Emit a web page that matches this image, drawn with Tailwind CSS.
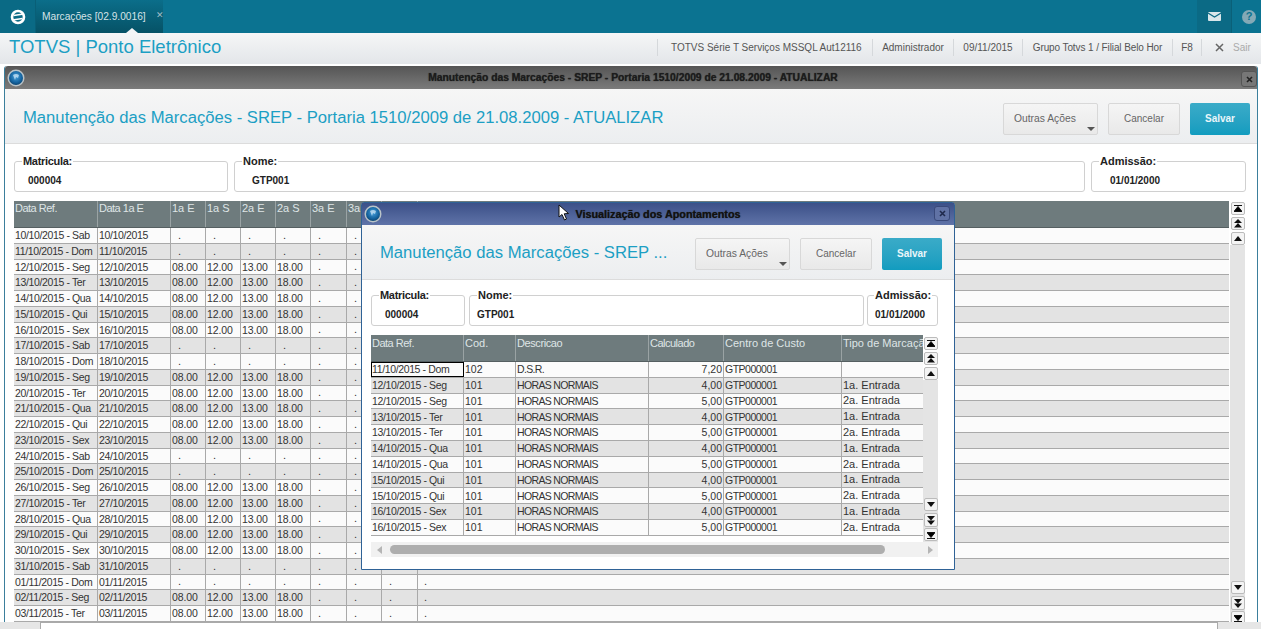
<!DOCTYPE html>
<html lang="pt-BR">
<head>
  <meta charset="UTF-8">
  <title>TOTVS | Ponto Eletrônico</title>
  <script src="https://cdn.jsdelivr.net/npm/@tailwindcss/browser@4"></script>
</head>
<body class="w-[1261px] h-[629px] overflow-hidden relative bg-white font-['Liberation_Sans',Arial,sans-serif] text-[#333]">

  <svg width="0" height="0" class="absolute">
    <defs>
      <radialGradient id="globe" cx="50%" cy="40%" r="60%"><stop offset="0" stop-color="#4aa3dd"/><stop offset="0.7" stop-color="#14639f"/><stop offset="1" stop-color="#0d4673"/></radialGradient>
    </defs>
  </svg>

  <!-- top bar -->
  <header class="h-[33px] flex bg-[#0b7391]">
    <div class="w-[36px] flex items-center justify-center bg-[#0a6a85] border-r border-[#095f77]">
      <svg width="18" height="18" viewBox="0 0 18 18" fill="none"><circle cx="9" cy="9" r="6" stroke="#fff" stroke-width="2.6"/><path d="M4.5 7.6 L13 6.2 M5 11.8 L13.5 10.4" stroke="#fff" stroke-width="1.5"/></svg>
    </div>
    <div class="w-[127px] relative flex items-center pl-[6px] gap-[10px] bg-gradient-to-b from-[#0b6e8a] to-[#065266] text-[10.2px] text-[#d5e3e8] whitespace-nowrap">
      <span>Marcações [02.9.0016]</span>
      <span class="text-[9px] text-[#9fbcc6] -mt-[2px]">✕</span>
      <span class="absolute left-[90px] bottom-0 w-0 h-0 border-x-[6px] border-x-transparent border-b-[5px] border-b-[#f4f5f6]"></span>
    </div>
    <div class="flex-1"></div>
    <div class="w-[35px] flex items-center justify-center bg-[#0b6a85] border-r border-[#0a6078]">
      <svg width="13" height="9" viewBox="0 0 13 9"><rect width="13" height="9" rx="1" fill="#d9e6ea"/><path d="M0 1 L6.5 5 L13 1" fill="none" stroke="#0b6a85" stroke-width="1.1"/></svg>
    </div>
    <div class="w-[29px] pl-[10px] flex items-center">
      <span class="w-[14px] h-[14px] shrink-0 rounded-full bg-[#84a9b6] text-[#0b7391] text-[11px] font-bold flex items-center justify-center">?</span>
    </div>
  </header>

  <!-- system bar -->
  <div class="h-[31px] flex items-center bg-gradient-to-b from-[#f5f6f7] to-[#e3e6e9] pl-[9px] pr-[10px] pb-[2px]">
    <span class="text-[18.5px] text-[#1c9fc4] leading-none">TOTVS | Ponto Eletrônico</span>
    <div class="ml-auto flex items-center text-[10px] text-[#555] whitespace-nowrap">
      <span class="w-[216px] h-[17px] pl-[13px] border-x border-[#d5d8db] flex items-center">TOTVS Série T Serviços MSSQL Aut12116</span>
      <span class="w-[81px] h-[17px] border-r border-[#d5d8db] flex items-center justify-center">Administrador</span>
      <span class="w-[69px] h-[17px] border-r border-[#d5d8db] flex items-center justify-center">09/11/2015</span>
      <span class="w-[150px] h-[17px] border-r border-[#d5d8db] flex items-center justify-center tracking-[-0.1px]">Grupo Totvs 1 / Filial Belo Hor</span>
      <span class="w-[29px] h-[17px] border-r border-[#d5d8db] flex items-center justify-center">F8</span>
      <span class="w-[49px] h-[17px] pl-[13px] flex items-center gap-[9px] text-[#aaa]"><svg class="shrink-0" width="9" height="9" viewBox="0 0 9 9"><path d="M1 1 L8 8 M8 1 L1 8" stroke="#666" stroke-width="1.5"/></svg>Sair</span>
    </div>
  </div>

  <!-- main window -->
  <main class="absolute left-[4px] right-[3px] top-[66px] bottom-0 border-x border-[#3b7f9c] rounded-t-[3px] bg-white flex flex-col">
    <div class="h-[23px] shrink-0 relative flex items-center justify-center pt-[1px] pl-[4px] bg-gradient-to-b from-[#555] to-[#7b7b7b] rounded-t-[3px] text-[10.3px] font-bold text-[#1c1c1c] [text-shadow:0_0_1px_#222]">
      <svg class="absolute left-[2px] top-[3px]" width="18" height="18" viewBox="0 0 18 18"><circle cx="9" cy="9" r="8.5" fill="#b9c3c8"/><circle cx="9" cy="9" r="7" fill="url(#globe)"/><path d="M6 6 Q9 4 12 6 L11 9 L9 8 L8 11 Z" fill="#cfe6f5" opacity=".75"/></svg>
      <span>Manutenção das Marcações - SREP - Portaria 1510/2009 de 21.08.2009 - ATUALIZAR</span>
      <span class="absolute right-0 top-[5px] w-[16px] h-[16px] rounded-[3px] border border-[#555] bg-[#777] flex items-center justify-center">
        <svg width="7" height="7" viewBox="0 0 7 7"><path d="M1 1 L6 6 M6 1 L1 6" stroke="#222" stroke-width="1.6"/></svg>
      </span>
    </div>

    <div class="h-[55px] shrink-0 flex items-center pl-[18px] pr-[7px] pt-[5px] gap-[10px] bg-gradient-to-b from-[#f6f6f6] to-[#eceef0] border-b border-[#dcdcdc]">
      <h1 class="text-[16.65px] text-[#1c9fc4] mr-auto whitespace-nowrap">Manutenção das Marcações - SREP - Portaria 1510/2009 de 21.08.2009 - ATUALIZAR</h1>
      <button class="w-[95px] h-[32px] shrink-0 relative rounded-[2px] border border-[#d8d8d8] bg-gradient-to-b from-[#f5f5f5] to-[#e9e9e9] text-[10.3px] text-[#666] text-left pl-[10px]">Outras Ações<span class="absolute right-[2px] bottom-[3px] w-0 h-0 border-x-[4px] border-x-transparent border-t-[4px] border-t-[#555]"></span></button>
      <button class="w-[72px] h-[32px] shrink-0 rounded-[2px] border border-[#d8d8d8] bg-gradient-to-b from-[#f5f5f5] to-[#e9e9e9] text-[10px] text-[#666]">Cancelar</button>
      <button class="w-[60px] h-[32px] shrink-0 rounded-[2px] bg-gradient-to-b from-[#3aabc8] to-[#119cbf] text-[10px] font-bold text-[#e9f6fa]">Salvar</button>
    </div>

    <div class="flex-1 min-h-0 pl-[9px] pt-[17px] bg-white flex flex-col">
      <div class="h-[31px] shrink-0 flex gap-[6px] text-[10px] font-bold text-[#222] pr-[11px]">
        <div class="w-[214px] relative border border-[#d0d0d0] rounded-[3px] pl-[13px] pt-[11px]">
          <span class="absolute left-[7px] -top-[7px] bg-white px-[1px] text-[11px] tracking-[-0.3px] leading-[13px]">Matricula:</span>000004
        </div>
        <div class="flex-1 relative border border-[#d0d0d0] rounded-[3px] pl-[17px] pt-[11px]">
          <span class="absolute left-[7px] -top-[7px] bg-white px-[1px] text-[11px] leading-[13px]">Nome:</span>GTP001
        </div>
        <div class="w-[155px] relative border border-[#d0d0d0] rounded-[3px] pl-[18px] pt-[11px]">
          <span class="absolute left-[7px] -top-[7px] bg-white px-[1px] text-[11px] leading-[13px]">Admissão:</span>01/01/2000
        </div>
      </div>
      <div class="flex mt-[9px] min-h-0 flex-1">
        <div class="w-[1215px] overflow-hidden text-[11px] leading-none">
          <div class="h-[27px] flex bg-[#6e7b7d] text-[#dfe5e6] border-b border-[#555f61]">
            <span class="w-[84px] border-r border-[#9aa3a4] pl-[1px] pt-[2px] tracking-[-0.5px]">Data Ref.</span>
            <span class="w-[73px] border-r border-[#9aa3a4] pl-[1px] pt-[2px] tracking-[-0.5px]">Data 1a E</span>
            <span class="w-[35px] border-r border-[#9aa3a4] pl-[1px] pt-[2px]">1a E</span>
            <span class="w-[35px] border-r border-[#9aa3a4] pl-[1px] pt-[2px]">1a S</span>
            <span class="w-[35px] border-r border-[#9aa3a4] pl-[1px] pt-[2px]">2a E</span>
            <span class="w-[35px] border-r border-[#9aa3a4] pl-[1px] pt-[2px]">2a S</span>
            <span class="w-[36px] border-r border-[#9aa3a4] pl-[1px] pt-[2px]">3a E</span>
            <span class="w-[35px] border-r border-[#9aa3a4] pl-[1px] pt-[2px]">3a S</span>
            <span class="w-[36px] border-r border-[#9aa3a4] pl-[1px] pt-[2px]">4a E</span>
            <span class="flex-1"></span>
          </div>
          <div id="outer-rows"></div>
        </div>
        <div class="w-[15px] ml-[1px] flex flex-col items-end relative">
          <div class="absolute top-[44px] bottom-0 inset-x-0 bg-[#e4e4e4]"></div>
          <div class="relative mt-[1px] w-[14px] h-[13px] border border-[#bbb] rounded-[2px] bg-[#f4f4f4] flex items-center justify-center"><svg width="8" height="8" viewBox="0 0 8 8"><path d="M0 0.5H8M4 1.5L8 6.5H0Z" stroke="#111" stroke-width="1"/></svg></div>
          <div class="relative mt-[2px] w-[14px] h-[13px] border border-[#bbb] rounded-[2px] bg-[#f4f4f4] flex items-center justify-center"><svg width="8" height="9" viewBox="0 0 8 9"><path d="M4 0L8 4H0ZM4 4L8 8.5H0Z" fill="#111"/></svg></div>
          <div class="relative mt-[2px] w-[14px] h-[13px] border border-[#bbb] rounded-[2px] bg-[#f4f4f4] flex items-center justify-center"><svg width="8" height="5" viewBox="0 0 8 5"><path d="M4 0L8 5H0Z" fill="#111"/></svg></div>
          <div class="absolute top-[380px] w-[14px] h-[13px] border border-[#bbb] rounded-[2px] bg-[#f4f4f4] flex items-center justify-center"><svg width="8" height="5" viewBox="0 0 8 5"><path d="M4 5L8 0H0Z" fill="#111"/></svg></div>
          <div class="absolute top-[395px] w-[14px] h-[14px] border border-[#bbb] rounded-[2px] bg-[#f4f4f4] flex items-center justify-center"><svg width="8" height="9" viewBox="0 0 8 9"><path d="M4 4.5L8 0H0ZM4 9L8 4.5H0Z" fill="#111"/></svg></div>
          <div class="absolute top-[410px] w-[14px] h-[13px] border border-[#bbb] rounded-[2px] bg-[#f4f4f4] flex items-center justify-center"><svg width="8" height="8" viewBox="0 0 8 8"><path d="M0 7.5H8M4 6.5L8 1.5H0Z" stroke="#111" stroke-width="1"/></svg></div>
        </div>
      </div>
    </div>
  </main>

  <!-- bottom strip -->
  <div class="absolute left-0 right-0 bottom-0 h-[7px] flex bg-[#e6e6e6]">
    <div class="ml-[40px] w-[1178px] bg-white border-t border-l border-r border-[#aaa]"></div>
  </div>

  <!-- modal window -->
  <section class="absolute left-[361px] top-[202px] w-[594px] h-[368px] border border-[#2f6296] rounded-t-[3px] bg-white flex flex-col">
    <div class="h-[22px] shrink-0 relative flex items-center justify-center bg-gradient-to-b from-[#3c5088] to-[#5f73a8] text-[10.8px] font-bold text-[#111] [text-shadow:0_0_1px_#222]">
      <svg class="absolute left-[2px] top-[2px]" width="18" height="18" viewBox="0 0 18 18"><circle cx="9" cy="9" r="8.5" fill="#b9c3c8"/><circle cx="9" cy="9" r="7" fill="url(#globe)"/><path d="M6 6 Q9 4 12 6 L11 9 L9 8 L8 11 Z" fill="#cfe6f5" opacity=".75"/></svg>
      <span>Visualização dos Apontamentos</span>
      <span class="absolute right-[4px] top-[3px] w-[16px] h-[15px] rounded-[3px] border border-[#39497a] bg-[#6072a5] flex items-center justify-center">
        <svg width="7" height="7" viewBox="0 0 7 7"><path d="M1 1 L6 6 M6 1 L1 6" stroke="#1f2a4d" stroke-width="1.6"/></svg>
      </span>
    </div>
    <div class="h-[55px] shrink-0 flex items-center pl-[18px] pr-[12px] pt-[3px] gap-[10px] bg-gradient-to-b from-[#f6f6f6] to-[#eceef0] border-b border-[#dcdcdc]">
      <h2 class="text-[16.65px] text-[#1c9fc4] mr-auto whitespace-nowrap">Manutenção das Marcações - SREP ...</h2>
      <button class="w-[95px] h-[32px] shrink-0 relative rounded-[2px] border border-[#d8d8d8] bg-gradient-to-b from-[#f5f5f5] to-[#e9e9e9] text-[10.3px] text-[#666] text-left pl-[10px]">Outras Ações<span class="absolute right-[2px] bottom-[3px] w-0 h-0 border-x-[4px] border-x-transparent border-t-[4px] border-t-[#555]"></span></button>
      <button class="w-[72px] h-[32px] shrink-0 rounded-[2px] border border-[#d8d8d8] bg-gradient-to-b from-[#f5f5f5] to-[#e9e9e9] text-[10px] text-[#666]">Cancelar</button>
      <button class="w-[60px] h-[32px] shrink-0 rounded-[2px] bg-gradient-to-b from-[#3aabc8] to-[#119cbf] text-[10px] font-bold text-[#e9f6fa]">Salvar</button>
    </div>
    <div class="flex-1 pl-[9px] pt-[15px] flex flex-col">
      <div class="h-[31px] shrink-0 flex text-[10px] font-bold text-[#222] pr-[16px]">
        <div class="w-[94px] relative border border-[#d0d0d0] rounded-[3px] pl-[13px] pt-[11px]">
          <span class="absolute left-[7px] -top-[7px] bg-white px-[1px] text-[11px] tracking-[-0.3px] leading-[13px]">Matricula:</span>000004
        </div>
        <div class="flex-1 ml-[4px] relative border border-[#d0d0d0] rounded-[3px] pl-[7px] pt-[11px]">
          <span class="absolute left-[7px] -top-[7px] bg-white px-[1px] text-[11px] leading-[13px]">Nome:</span>GTP001
        </div>
        <div class="w-[71px] ml-[3px] relative border border-[#d0d0d0] rounded-[3px] pl-[7px] pt-[11px]">
          <span class="absolute left-[6px] -top-[7px] bg-white px-[1px] text-[11px] leading-[13px]">Admissão:</span>01/01/2000
        </div>
      </div>
      <div class="flex mt-[9px] w-[567px] relative">
        <div class="w-[552px] h-[207px] overflow-hidden text-[11px] leading-none">
          <div class="h-[27px] flex bg-[#6e7b7d] text-[#dfe5e6] border-b border-[#555f61]">
            <span class="w-[93px] border-r border-[#9aa3a4] pl-[1px] pt-[3px] tracking-[-0.5px]">Data Ref.</span>
            <span class="w-[52px] border-r border-[#9aa3a4] pl-[1px] pt-[3px]">Cod.</span>
            <span class="w-[133px] border-r border-[#9aa3a4] pl-[1px] pt-[3px] tracking-[-0.4px]">Descricao</span>
            <span class="w-[75px] border-r border-[#9aa3a4] pl-[1px] pt-[3px] tracking-[-0.5px]">Calculado</span>
            <span class="w-[118px] border-r border-[#9aa3a4] pl-[1px] pt-[3px]">Centro de Custo</span>
            <span class="flex-1 pl-[1px] pt-[3px] whitespace-nowrap overflow-hidden">Tipo de Marcação</span>
          </div>
          <div id="modal-rows"></div>
        </div>
        <div class="w-[15px] h-[207px] flex flex-col items-end relative">
          <div class="absolute top-[45px] bottom-0 inset-x-0 bg-[#e4e4e4]"></div>
          <div class="relative mt-[2px] w-[14px] h-[13px] border border-[#bbb] rounded-[2px] bg-[#f4f4f4] flex items-center justify-center"><svg width="8" height="8" viewBox="0 0 8 8"><path d="M0 0.5H8M4 1.5L8 6.5H0Z" stroke="#111" stroke-width="1"/></svg></div>
          <div class="relative mt-[2px] w-[14px] h-[13px] border border-[#bbb] rounded-[2px] bg-[#f4f4f4] flex items-center justify-center"><svg width="8" height="9" viewBox="0 0 8 9"><path d="M4 0L8 4H0ZM4 4L8 8.5H0Z" fill="#111"/></svg></div>
          <div class="relative mt-[2px] w-[14px] h-[13px] border border-[#bbb] rounded-[2px] bg-[#f4f4f4] flex items-center justify-center"><svg width="8" height="5" viewBox="0 0 8 5"><path d="M4 0L8 5H0Z" fill="#111"/></svg></div>
          <div class="absolute top-[163px] w-[14px] h-[13px] border border-[#bbb] rounded-[2px] bg-[#f4f4f4] flex items-center justify-center"><svg width="8" height="5" viewBox="0 0 8 5"><path d="M4 5L8 0H0Z" fill="#111"/></svg></div>
          <div class="absolute top-[178px] w-[14px] h-[14px] border border-[#bbb] rounded-[2px] bg-[#f4f4f4] flex items-center justify-center"><svg width="8" height="9" viewBox="0 0 8 9"><path d="M4 4.5L8 0H0ZM4 9L8 4.5H0Z" fill="#111"/></svg></div>
          <div class="absolute top-[193px] w-[14px] h-[13px] border border-[#bbb] rounded-[2px] bg-[#f4f4f4] flex items-center justify-center"><svg width="8" height="8" viewBox="0 0 8 8"><path d="M0 7.5H8M4 6.5L8 1.5H0Z" stroke="#111" stroke-width="1"/></svg></div>
        </div>
      </div>
      <div class="w-[567px] h-[15px] bg-[#f1f1f1] flex items-center">
        <svg class="ml-[6px]" width="5" height="8" viewBox="0 0 5 8"><path d="M0 4L5 0V8Z" fill="#b5b5b5"/></svg>
        <div class="ml-[8px] w-[495px] h-[9px] rounded-full bg-[#aeaeae]"></div>
        <svg class="ml-[43px]" width="5" height="8" viewBox="0 0 5 8"><path d="M5 4L0 0V8Z" fill="#b5b5b5"/></svg>
      </div>
    </div>
  </section>

  <!-- mouse pointer -->
  <svg class="absolute left-[558px] top-[204px]" width="12" height="17" viewBox="0 0 12 17"><path d="M1 1 L1 13 L4 10.5 L6.5 16 L8.5 15 L6.2 9.8 L10.5 9.5 Z" fill="#fff" stroke="#111" stroke-width="1"/></svg>

  <script>
    // outer grid: 25 days from 10/10/2015
    const outerDays = [
      ['10/10/2015 - Sab', 0], ['11/10/2015 - Dom', 0], ['12/10/2015 - Seg', 1], ['13/10/2015 - Ter', 1],
      ['14/10/2015 - Qua', 1], ['15/10/2015 - Qui', 1], ['16/10/2015 - Sex', 1], ['17/10/2015 - Sab', 0],
      ['18/10/2015 - Dom', 0], ['19/10/2015 - Seg', 1], ['20/10/2015 - Ter', 1], ['21/10/2015 - Qua', 1],
      ['22/10/2015 - Qui', 1], ['23/10/2015 - Sex', 1], ['24/10/2015 - Sab', 0], ['25/10/2015 - Dom', 0],
      ['26/10/2015 - Seg', 1], ['27/10/2015 - Ter', 1], ['28/10/2015 - Qua', 1], ['29/10/2015 - Qui', 1],
      ['30/10/2015 - Sex', 1], ['31/10/2015 - Sab', 0], ['01/11/2015 - Dom', 0], ['02/11/2015 - Seg', 1],
      ['03/11/2015 - Ter', 1]
    ];
    const cell = 'h-full border-r border-[#a9a9a9] pl-[1px] flex items-center whitespace-nowrap overflow-hidden';
    const dot = 'pl-[6px]';
    const dates = 'text-[10.5px] tracking-[-0.37px]';
    document.getElementById('outer-rows').innerHTML = outerDays.map(([d, work], i) => {
      const bg = i % 2 ? 'bg-[#e3e3e3]' : 'bg-[#fbfbfb]';
      const t = v => work ? `<span class="text-[10.5px] tracking-[-0.1px]">${v}</span>` : `<span class="${dot}">.</span>`;
      return `<div class="h-[15.75px] flex ${bg} border-b border-[#a9a9a9] text-[#333]">
        <span class="w-[84px] ${cell} ${dates}">${d}</span>
        <span class="w-[73px] ${cell} ${dates}">${d.slice(0, 10)}</span>
        <span class="w-[35px] ${cell}">${t('08.00')}</span>
        <span class="w-[35px] ${cell}">${t('12.00')}</span>
        <span class="w-[35px] ${cell}">${t('13.00')}</span>
        <span class="w-[35px] ${cell}">${t('18.00')}</span>
        <span class="w-[36px] ${cell}"><span class="${dot}">.</span></span>
        <span class="w-[35px] ${cell}"><span class="${dot}">.</span></span>
        <span class="w-[36px] ${cell}"><span class="${dot}">.</span></span>
        <span class="flex-1 pl-[6px] flex items-center">.</span>
      </div>`;
    }).join('');

    // modal grid
    const modalRows = [
      ['11/10/2015 - Dom', '102', 'D.S.R.', '7,20', ''],
      ['12/10/2015 - Seg', '101', 'HORAS NORMAIS', '4,00', '1a. Entrada'],
      ['12/10/2015 - Seg', '101', 'HORAS NORMAIS', '5,00', '2a. Entrada'],
      ['13/10/2015 - Ter', '101', 'HORAS NORMAIS', '4,00', '1a. Entrada'],
      ['13/10/2015 - Ter', '101', 'HORAS NORMAIS', '5,00', '2a. Entrada'],
      ['14/10/2015 - Qua', '101', 'HORAS NORMAIS', '4,00', '1a. Entrada'],
      ['14/10/2015 - Qua', '101', 'HORAS NORMAIS', '5,00', '2a. Entrada'],
      ['15/10/2015 - Qui', '101', 'HORAS NORMAIS', '4,00', '1a. Entrada'],
      ['15/10/2015 - Qui', '101', 'HORAS NORMAIS', '5,00', '2a. Entrada'],
      ['16/10/2015 - Sex', '101', 'HORAS NORMAIS', '4,00', '1a. Entrada'],
      ['16/10/2015 - Sex', '101', 'HORAS NORMAIS', '5,00', '2a. Entrada']
    ];
    document.getElementById('modal-rows').innerHTML = modalRows.map((r, i) => {
      const bg = i % 2 ? 'bg-[#e3e3e3]' : 'bg-[#fbfbfb]';
      const first = i === 0 ? 'outline outline-1 -outline-offset-1 outline-black' : '';
      return `<div class="h-[15.8px] flex ${bg} border-b border-[#a9a9a9] text-[#333]">
        <span class="w-[93px] ${cell} ${first} ${dates}">${r[0]}</span>
        <span class="w-[52px] ${cell} text-[10.5px]">${r[1]}</span>
        <span class="w-[133px] ${cell} text-[10.5px] tracking-[-0.65px]">${r[2]}</span>
        <span class="w-[75px] ${cell} justify-end pr-[1px] text-[10.5px]">${r[3]}</span>
        <span class="w-[118px] ${cell} text-[10.5px] tracking-[-0.5px]">GTP000001</span>
        <span class="flex-1 pl-[1px] flex items-center">${r[4]}</span>
      </div>`;
    }).join('');
  </script>
</body>
</html>
